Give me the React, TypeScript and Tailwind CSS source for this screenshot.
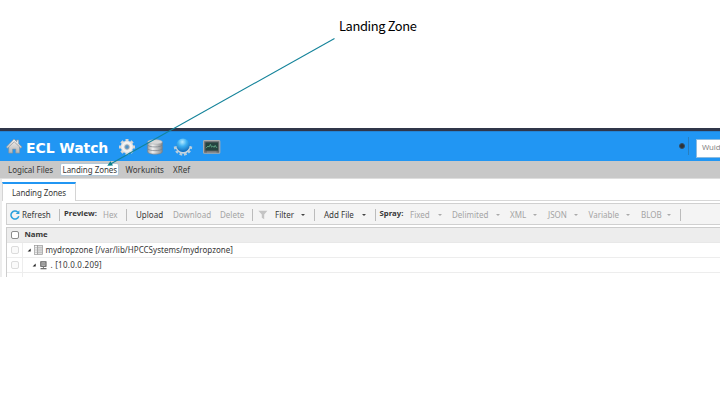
import React from "react";

const FONT = "font-['Noto_Sans','Open_Sans',sans-serif]";

function Caret({ className }: { className: string }) {
  return <span className={`block h-0 w-0 border-x-[2px] border-t-[2.5px] border-x-transparent ${className}`} />;
}

function Slot({ w, children, className = "" }: { w: string; children?: React.ReactNode; className?: string }) {
  return <div className={`flex h-full shrink-0 items-center whitespace-nowrap ${w} ${className}`}>{children}</div>;
}

function Separator({ w }: { w: string }) {
  return (
    <Slot w={w}>
      <span className="block h-[12px] w-px bg-[#bcbcbc]" />
    </Slot>
  );
}

function HomeIcon() {
  return (
    <svg width="17" height="17" viewBox="0 0 17 17">
      <defs>
        <linearGradient id="home" x1="0" y1="0" x2="0" y2="1">
          <stop offset="0" stopColor="#f4f4f4" />
          <stop offset="1" stopColor="#b4b4b4" />
        </linearGradient>
      </defs>
      <path d="M8 1 10.7 3.7V2h2v3.7L16 9l-1.2 1.2-1.3-1.1v6H9.8v-4H6.6v4H2.8v-6l-1.3 1.1L.4 9z" fill="url(#home)" stroke="#8b969e" strokeWidth=".7" />
      <path d="M2.8 8.9 8.2 3.8l5.3 5" fill="none" stroke="#929292" strokeWidth=".7" />
    </svg>
  );
}

function GearIcon() {
  return (
    <svg width="18" height="18" viewBox="0 0 18 18">
      <g stroke="#d4d4d4" strokeWidth="3">
        <path d="M9 1v16M1 9h16M3.4 3.4l11.2 11.2M14.6 3.4 3.4 14.6" />
      </g>
      <circle cx="9" cy="9" r="6.2" fill="#e3e3e3" />
      <circle cx="9" cy="9" r="4.2" fill="none" stroke="#f5f5f5" strokeWidth="1.5" />
      <circle cx="9" cy="9" r="2.2" fill="#4b92ca" stroke="#a4a9ad" strokeWidth=".9" />
    </svg>
  );
}

function DatabaseIcon() {
  return (
    <svg width="16" height="16" viewBox="0 0 16 16">
      <defs>
        <linearGradient id="disk">
          <stop offset="0" stopColor="#a5a5a5" />
          <stop offset=".35" stopColor="#f0f0f0" />
          <stop offset="1" stopColor="#85888b" />
        </linearGradient>
      </defs>
      <path d="M.7 10.3v2.6c0 3 14.6 3 14.6 0v-2.6" fill="url(#disk)" stroke="#788087" strokeWidth=".7" />
      <path d="M.7 6.4v3c0 3 14.6 3 14.6 0v-3" fill="url(#disk)" stroke="#788087" strokeWidth=".7" />
      <path d="M.7 2.9v2.8c0 3 14.6 3 14.6 0V2.9" fill="url(#disk)" stroke="#788087" strokeWidth=".7" />
      <ellipse cx="8" cy="2.9" rx="7.3" ry="2.3" fill="#d8d8d8" stroke="#a5a9ac" strokeWidth=".5" />
    </svg>
  );
}

function GlobeIcon() {
  return (
    <svg width="20" height="18" viewBox="0 0 20 18">
      <defs>
        <radialGradient id="globe" cx=".45" cy=".25" r=".8">
          <stop offset="0" stopColor="#b5eaff" />
          <stop offset=".4" stopColor="#3eb1f3" />
          <stop offset="1" stopColor="#0c63b5" />
        </radialGradient>
      </defs>
      <path d="M2 8.5a8 8 0 0 0 16 0" fill="none" stroke="#b7ccdb" strokeWidth="2.4" strokeDasharray="2.7 1.8" />
      <path d="M3.5 8a6.5 6.5 0 0 0 13.3 0" fill="none" stroke="#c5d4df" strokeWidth="2" />
      <circle cx="10" cy="7.3" r="6.7" fill="url(#globe)" />
    </svg>
  );
}

function MonitorIcon() {
  return (
    <svg width="18" height="14" viewBox="0 0 18 14">
      <rect x=".6" y=".6" width="16.2" height="12.6" rx=".8" fill="#65696b" stroke="#a9adaf" strokeWidth="1.1" />
      <rect x="2.4" y="2.4" width="12.7" height="8.2" fill="#24433f" />
      <path d="M3 8.2l2-2.2 1 1.1 1.4-2.7 1.2 2.8 1.2-1.2 1.2 1.4 1.2-2 1 2h1" fill="none" stroke="#5fa584" strokeWidth=".9" />
      <path d="M4 12.1h9.5" stroke="#a1a5a7" strokeWidth=".7" />
    </svg>
  );
}

function RefreshIcon() {
  return (
    <svg width="10" height="10" viewBox="0 0 10 10">
      <path d="M7.8 2.2A4 4 0 1 0 8.8 6.3" fill="none" stroke="#2aa0dc" strokeWidth="1.5" />
      <path d="M5.7 4.1H9.4V.2z" fill="#2aa0dc" />
    </svg>
  );
}

function DropzoneIcon() {
  return (
    <svg width="10" height="10" viewBox="0 0 10 10">
      <rect x=".5" y=".5" width="3" height="9" fill="#f2f2f2" stroke="#999" strokeWidth=".7" />
      <rect x="3.5" y=".5" width="5" height="9" fill="#dedede" stroke="#999" strokeWidth=".7" />
      <path d="M1 2.7h7.3M1 5h7.3M1 7.3h7.3" stroke="#a4a4a4" strokeWidth=".6" />
    </svg>
  );
}

function ComputerIcon() {
  return (
    <svg width="7" height="9" viewBox="0 0 7 9">
      <rect x=".8" y=".8" width="5.2" height="4.5" fill="#c5c5c5" stroke="#555" strokeWidth="1" />
      <path d="M1.5 3h3.8M3.4 5.5V7" stroke="#777" />
      <path d="M.5 7.7h6" stroke="#555" strokeWidth="1.1" />
    </svg>
  );
}

function Expando() {
  return (
    <svg width="5" height="5" viewBox="0 0 5 5">
      <path d="M3.7 .6V3.6H.6z" fill="#222" />
    </svg>
  );
}

function Checkbox({ className }: { className: string }) {
  return <span className={`block h-[8px] w-[8px] rounded-[2px] border ${className}`} />;
}

const disabled = "text-[#a4a4a4]";

export default function App() {
  return (
    <div className={`relative h-[405px] w-[720px] overflow-hidden bg-white ${FONT} text-[8px] leading-none text-[#383838]`}>
      <div className="flex h-[128px] pl-[339px] pt-[18px] font-['Noto_Sans_CJK_SC','Noto_Sans',sans-serif] text-[12.9px] leading-[15px] tracking-[-0.38px] text-black">
        <span className="whitespace-nowrap">Landing Zone</span>
      </div>

      <div className="h-[3px] bg-[#30364a]" />
      <header className="flex h-[30px] items-center border-t border-[#2384d6] bg-[#2196f3]">
        <Slot w="w-[26px]" className="pl-[6px]"><HomeIcon /></Slot>
        <Slot w="w-[92px]" className="pt-[2px] font-['DejaVu_Sans',sans-serif] text-[14px] font-bold tracking-[-0.08px] text-white">ECL Watch</Slot>
        <Slot w="w-[29px]"><GearIcon /></Slot>
        <Slot w="w-[26px]" className="pt-px"><DatabaseIcon /></Slot>
        <Slot w="w-[30px]"><GlobeIcon /></Slot>
        <Slot w="w-[476px]" className="pt-px"><MonitorIcon /></Slot>
        <Slot w="w-[9px]" className="pb-px">
          <span className="block h-[6px] w-[6px] rounded-full border border-[#314f68] bg-[#303234]" />
        </Slot>
        <Slot w="w-[8px]" className="pb-px"><span className="h-[18px] w-px bg-[#287ebf]" /></Slot>
        <div className="mt-[3px] flex h-[19px] w-[24px] shrink-0 items-center border border-r-0 border-[#8cbbe0] bg-white pl-[5px] text-[#888]">
          <span className="text-[7.8px] tracking-[-0.1px]">Wuid</span>
        </div>
      </header>

      <nav className="flex h-[18px] items-center border-b border-[#dedede] bg-[#c8c8c8]">
        <Slot w="w-[60px]" className="pl-[8px] pt-px">Logical Files</Slot>
        <Slot w="w-[65.5px]">
          <span className="flex h-[13px] w-[59px] items-center rounded-[2px] border border-[#b3c8d8] bg-white pl-[1.5px] pt-px tracking-[-0.05px]">Landing Zones</span>
        </Slot>
        <Slot w="w-[47.5px]" className="pt-px">Workunits</Slot>
        <Slot w="w-[40px]" className="pt-px">XRef</Slot>
      </nav>

      <main className="flex h-[98px] flex-col border-l-[2px] border-[#ededed] pt-[3px]">
        <div className="flex h-[19px] shrink-0 border-b border-[#d7d7d7]">
          <div className="-mb-px flex w-[74px] items-center border-x border-t-[2px] border-x-[#d4d4d4] border-t-[#2196f3] bg-white pl-[9px] tracking-[-0.1px]">Landing Zones</div>
        </div>

        <div className="ml-[4px] mt-[2px] flex h-[22px] shrink-0 items-center border border-r-0 border-[#d0d0d0] bg-[#f4f4f4] pl-[3px] pt-[2px]">
          <Slot w="w-[12px]"><RefreshIcon /></Slot>
          <Slot w="w-[37px]">Refresh</Slot>
          <Separator w="w-[5px]" />
          <Slot w="w-[39px]" className="pb-[2px] text-[7.8px] font-bold">Preview:</Slot>
          <Slot w="w-[23px]" className={disabled}>Hex</Slot>
          <Separator w="w-[10px]" />
          <Slot w="w-[37px]">Upload</Slot>
          <Slot w="w-[47px]" className={disabled}>Download</Slot>
          <Slot w="w-[32px]" className={disabled}>Delete</Slot>
          <Separator w="w-[6px]" />
          <Slot w="w-[17px]">
            <svg width="10" height="10" viewBox="0 0 10 10"><path d="M.4.7h9L6.2 4.6v4.7L3.8 7.7V4.6z" fill="#c4c4c4" /></svg>
          </Slot>
          <Slot w="w-[26px]">Filter</Slot>
          <Slot w="w-[13px]"><Caret className="border-t-[#444]" /></Slot>
          <Separator w="w-[10px]" />
          <Slot w="w-[37.5px]">Add File</Slot>
          <Slot w="w-[13px]"><Caret className="border-t-[#444]" /></Slot>
          <Separator w="w-[5px]" />
          <Slot w="w-[30.5px]" className="pb-[2px] text-[7.8px] font-bold">Spray:</Slot>
          <Slot w="w-[27.5px]" className={disabled}>Fixed</Slot>
          <Slot w="w-[14.5px]"><Caret className="border-t-[#aaa]" /></Slot>
          <Slot w="w-[43.5px]" className={disabled}>Delimited</Slot>
          <Slot w="w-[14.5px]"><Caret className="border-t-[#aaa]" /></Slot>
          <Slot w="w-[23px]" className={disabled}>XML</Slot>
          <Slot w="w-[15px]"><Caret className="border-t-[#aaa]" /></Slot>
          <Slot w="w-[26px]" className={disabled}>JSON</Slot>
          <Slot w="w-[14.5px]"><Caret className="border-t-[#aaa]" /></Slot>
          <Slot w="w-[37.5px]" className={disabled}>Variable</Slot>
          <Slot w="w-[15px]"><Caret className="border-t-[#aaa]" /></Slot>
          <Slot w="w-[26px]" className={disabled}>BLOB</Slot>
          <Slot w="w-[13px]"><Caret className="border-t-[#aaa]" /></Slot>
          <Separator w="w-[10px]" />
        </div>

        <div className="ml-[4px] mt-[2px] flex h-[50px] shrink-0 flex-col border-l border-t border-[#cdcdcd]">
          <div className="flex h-[15px] shrink-0 items-center border-b border-[#e8e8e8] bg-[#ededed] font-bold">
            <Slot w="w-[17.5px]" className="pl-[4px]"><Checkbox className="border-[#8c8c8c] bg-white" /></Slot>
            <Slot w="w-[60px]" className="text-[7.8px]">Name</Slot>
          </div>
          <div className="flex h-[15px] shrink-0 items-center border-b border-[#ededed]">
            <Slot w="w-[16px]" className="border-r border-[#ededed] pl-[4px]"><Checkbox className="border-[#dcdcdc] bg-[#fafafa]" /></Slot>
            <Slot w="w-[11px]" className="pl-[4px]"><Expando /></Slot>
            <Slot w="w-[11.5px]"><DropzoneIcon /></Slot>
            <Slot w="w-[200px]" className="tracking-[0.02px]">mydropzone [/var/lib/HPCCSystems/mydropzone]</Slot>
          </div>
          <div className="flex h-[15px] shrink-0 items-center border-b border-[#ededed]">
            <Slot w="w-[16px]" className="border-r border-[#ededed] pl-[4px]"><Checkbox className="border-[#dcdcdc] bg-[#fafafa]" /></Slot>
            <Slot w="w-[17px]" className="pl-[9px]"><Expando /></Slot>
            <Slot w="w-[10.5px]"><ComputerIcon /></Slot>
            <Slot w="w-[80px]" className="tracking-[0.25px]">. [10.0.0.209]</Slot>
          </div>
          <div className="w-[16px] flex-1 border-r border-[#ededed]" />
        </div>
      </main>

      <svg className="absolute left-0 top-0" width="720" height="405" viewBox="0 0 720 405">
        <path d="M334.5 38.5 110.5 164" stroke="#14839a" strokeWidth="1.1" />
        <path d="M107.3 165.8 110.4 161.2 113 165.6z" fill="#087f8c" />
      </svg>
    </div>
  );
}
